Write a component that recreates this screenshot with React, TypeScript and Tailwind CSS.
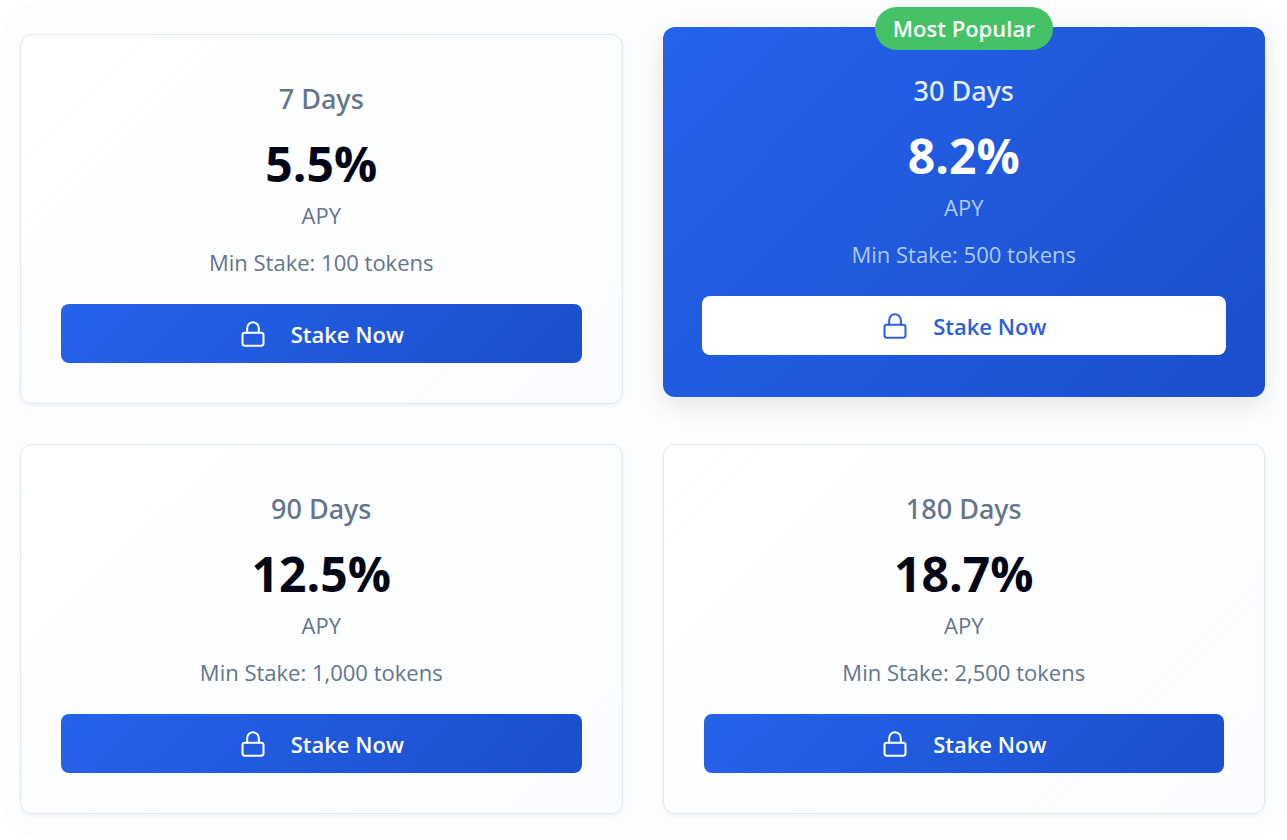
import { Lock } from "lucide-react";
import clsx from "clsx";

type Plan = {
  days: number;
  apy: string;
  minStake: string;
  popular?: boolean;
};

const plans: Plan[] = [
  { days: 7, apy: "5.5%", minStake: "100" },
  { days: 30, apy: "8.2%", minStake: "500", popular: true },
  { days: 90, apy: "12.5%", minStake: "1,000" },
  { days: 180, apy: "18.7%", minStake: "2,500" },
];

function PlanCard({ days, apy, minStake, popular = false }: Plan) {
  return (
    <article
      className={clsx(
        "relative flex flex-col rounded-xl text-center",
        popular
          ? "-translate-y-[7px] bg-[linear-gradient(135deg,#2563eb,#1a4fcc)] px-[39px] py-10 shadow-[0_8px_24px_rgba(0,0,0,0.1)]"
          : "border border-[#e2e8f0] bg-[linear-gradient(135deg,#ffffff,#fafcff)] p-10 shadow-[0_2px_4px_rgba(0,0,0,0.05)]",
      )}
    >
      {popular && (
        <span className="absolute -top-5 left-1/2 -translate-x-1/2 rounded-full bg-[#44c265] px-[18px] py-1 text-[22px] leading-[35px] font-semibold whitespace-nowrap text-white">
          Most Popular
        </span>
      )}
      <h2
        className={clsx(
          "font-['Noto_Sans','Open_Sans',sans-serif] text-[27px] leading-12 font-medium",
          popular ? "text-[#e4ecfc]" : "text-[#64748b]",
        )}
      >
        {days} Days
      </h2>
      <p
        className={clsx(
          "mt-2 text-5xl leading-[66px] font-bold",
          popular ? "text-white" : "text-[#020617]",
        )}
      >
        {apy}
      </p>
      <p
        className={clsx(
          "mt-[2px] text-[22px] leading-8",
          popular ? "text-[#b3c8f5]" : "text-[#64748b]",
        )}
      >
        APY
      </p>
      <p
        className={clsx(
          "mt-4 text-[22px] leading-[30px]",
          popular ? "text-[#b3c8f5]" : "text-[#64748b]",
        )}
      >
        Min Stake: {minStake} tokens
      </p>
      <button
        type="button"
        className={clsx(
          "mt-[27px] flex h-[59px] w-full items-center justify-center gap-6 rounded-lg pt-px text-[22px] font-semibold",
          popular
            ? "bg-white text-[#2b60dc]"
            : "bg-[linear-gradient(135deg,#2563eb,#1a4fcc)] text-white",
        )}
      >
        <Lock size={28} strokeWidth={1.75} aria-hidden="true" />
        Stake Now
      </button>
    </article>
  );
}

export default function App() {
  return (
    <main className="min-h-screen bg-white font-['Open_Sans','Noto_Sans',sans-serif]">
      <section className="grid min-h-screen grid-cols-2 content-start gap-10 rounded-[48px] bg-[#fbfdff] pt-[34px] pr-[22px] pb-6 pl-5">
        {plans.map((plan) => (
          <PlanCard key={plan.days} {...plan} />
        ))}
      </section>
    </main>
  );
}
